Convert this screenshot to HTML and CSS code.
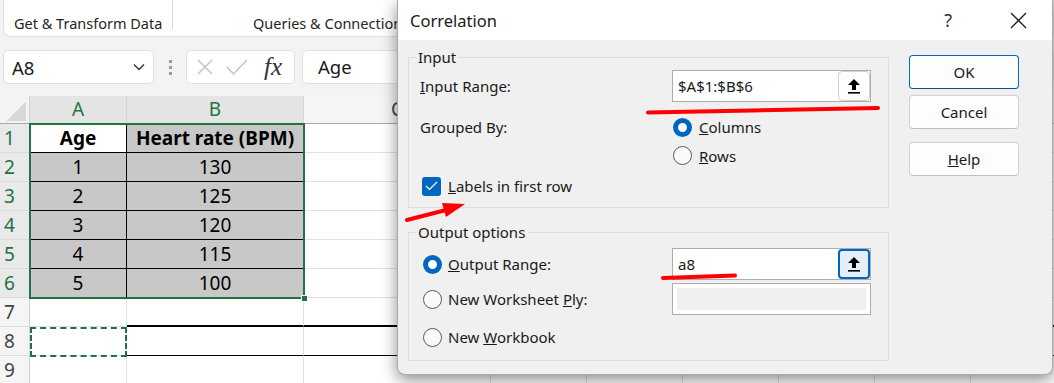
FILE: index.html
```html
<!DOCTYPE html>
<html lang="en">
<head>
  <meta charset="UTF-8" />
  <meta name="viewport" content="width=device-width, initial-scale=1.0" />
  <title>Correlation</title>
  <link rel="stylesheet" href="styles.css">
</head>
<body>
  <div class="excel">
    <div class="ribbon">
      <div class="ribbon-group group-get">Get &amp; Transform Data</div>
      <div class="ribbon-group group-queries">Queries &amp; Connections</div>
    </div>

    <div class="formula-bar">
      <div class="name-box">
        <span>A8</span>
        <svg width="12" height="8" viewBox="0 0 12 8"><path d="M1 1.5 L6 6.5 L11 1.5" fill="none" stroke="#333" stroke-width="1.4"/></svg>
      </div>
      <div class="grip"><i></i><i></i><i></i></div>
      <div class="fx-box">
        <svg width="18" height="18" viewBox="0 0 18 18"><path d="M2 2 L16 16 M16 2 L2 16" stroke="#c4c4c4" stroke-width="1.5"/></svg>
        <svg width="22" height="18" viewBox="0 0 22 18"><path d="M1 9 L7.5 16 L21 2" fill="none" stroke="#c4c4c4" stroke-width="1.5"/></svg>
        <span class="fx">fx</span>
      </div>
      <div class="formula-input">Age</div>
    </div>

    <div class="sheet" id="sheet">
      <div class="selection"><span class="fill-handle"></span></div>
      <div class="marquee"></div>
    </div>
  </div>

  <div class="dialog">
    <div class="dialog-title">
      <span class="title-text">Correlation</span>
      <span class="title-help">?</span>
      <svg class="title-close" width="17" height="17" viewBox="0 0 17 17"><path d="M1 1 L16 16 M16 1 L1 16" stroke="#1a1a1a" stroke-width="1.3"/></svg>
    </div>
    <div class="dialog-body">
      <div class="dialog-main">
        <fieldset class="group group-input">
          <legend>Input</legend>
          <div class="field-row range-row">
            <span class="field-label"><u>I</u>nput Range:</span>
            <div class="ref-box">
              <span class="ref-text">$A$1:$B$6</span>
              <span class="ref-btn">
                <svg width="12" height="15" viewBox="0 0 12 15"><path d="M6 0 L12 6 L8 6 L8 11 L4 11 L4 6 L0 6 Z" fill="#000"/><rect x="0" y="13" width="12" height="1.6" fill="#000"/></svg>
              </span>
            </div>
          </div>
          <div class="field-row radio-row first-radio">
            <span class="field-label">Grouped By:</span>
            <span class="radio on"></span>
            <span><u>C</u>olumns</span>
          </div>
          <div class="field-row radio-row">
            <span class="field-label"></span>
            <span class="radio"></span>
            <span><u>R</u>ows</span>
          </div>
          <div class="field-row check-row">
            <span class="check">
              <svg width="13" height="10" viewBox="0 0 13 10"><path d="M1 5 L4.5 8.5 L12 1" fill="none" stroke="#fff" stroke-width="1.2"/></svg>
            </span>
            <span><u>L</u>abels in first row</span>
          </div>
        </fieldset>

        <fieldset class="group group-output">
          <legend>Output options</legend>
          <div class="field-row range-row out-row">
            <span class="field-label option-label"><span class="radio on"></span><span><u>O</u>utput Range:</span></span>
            <div class="ref-box">
              <span class="ref-text">a8</span>
              <span class="ref-btn focused">
                <svg width="12" height="15" viewBox="0 0 12 15"><path d="M6 0 L12 6 L8 6 L8 11 L4 11 L4 6 L0 6 Z" fill="#000"/><rect x="0" y="13" width="12" height="1.6" fill="#000"/></svg>
              </span>
            </div>
          </div>
          <div class="field-row range-row ply-row">
            <span class="field-label option-label"><span class="radio"></span><span>New Worksheet <u>P</u>ly:</span></span>
            <div class="ref-box disabled"><span class="disabled-fill"></span></div>
          </div>
          <div class="field-row book-row">
            <span class="field-label option-label"><span class="radio"></span><span>New <u>W</u>orkbook</span></span>
          </div>
        </fieldset>
      </div>

      <div class="dialog-buttons">
        <button class="btn btn-default">OK</button>
        <button class="btn">Cancel</button>
        <button class="btn btn-help"><u>H</u>elp</button>
      </div>
    </div>
  </div>

  <svg class="marks" width="1054" height="383" viewBox="0 0 1054 383">
    <path d="M648 112.5 L878 108" stroke="#f00" stroke-width="4" stroke-linecap="round" fill="none"/>
    <path d="M663 278 L735 275.5" stroke="#f00" stroke-width="4" stroke-linecap="round" fill="none"/>
    <path d="M407 220 L446 210" stroke="#f00" stroke-width="4" stroke-linecap="round" fill="none"/>
    <path d="M465 204 L442 203 L446 217 Z" fill="#f00"/>
  </svg>

  <script>
    const cols = ['A', 'B', 'C', 'D', 'E', 'F', 'G', 'H', 'I'];
    const data = {
      1: ['Age', 'Heart rate (BPM)'],
      2: ['1', '130'],
      3: ['2', '125'],
      4: ['3', '120'],
      5: ['4', '115'],
      6: ['5', '100']
    };

    const sheet = document.getElementById('sheet');

    function addCell(cls, text) {
      const el = document.createElement('div');
      el.className = cls;
      el.textContent = text || '';
      sheet.appendChild(el);
    }

    addCell('corner');
    cols.forEach((c, i) => addCell('col-head' + (i < 2 ? ' sel' : ''), c));

    for (let r = 1; r <= 9; r++) {
      addCell('row-head' + (r <= 6 ? ' sel' : ''), r);
      cols.forEach((c, i) => {
        let cls = 'cell';
        if (data[r] && i < 2) {
          cls += ' data';
          if (r === 1) cls += ' bold';
          if (r === 1 && i === 0) cls += ' plain';
          if (i === 0) cls += ' rule-right';
          if (r < 6) cls += ' rule-bottom';
        }
        if (r === 7 && i > 0) cls += ' rule-thick';
        if (r === 8 && i > 0) cls += ' rule-bottom';
        addCell(cls, data[r] && i < 2 ? data[r][i] : '');
      });
    }
  </script>
</body>
</html>
```

FILE: styles.css
```css
* {
  margin: 0;
  padding: 0;
  box-sizing: border-box;
}

body {
  width: 1054px;
  height: 383px;
  overflow: hidden;
  position: relative;
  background: #f3f3f3;
  font-family: 'Noto Sans', 'Open Sans', sans-serif;
  color: #1a1a1a;
}

/* ---- excel behind the dialog ---- */

.ribbon {
  display: flex;
  height: 37px;
  margin-left: 3px;
  background: #fff;
  border: 1px solid #e2e2e2;
  border-top: none;
  border-bottom-left-radius: 8px;
}

.ribbon-group {
  font-size: 14.5px;
  color: #262626;
  padding-top: 13px;
  white-space: nowrap;
}

.group-get {
  width: 169px;
  padding-left: 10px;
  height: 29px;
  border-right: 1px solid #d6d6d6;
}

.group-queries {
  padding-left: 80px;
}

.formula-bar {
  display: flex;
  align-items: center;
  height: 34px;
  margin-top: 13px;
  padding-left: 3px;
}

.name-box {
  width: 151px;
  height: 34px;
  display: flex;
  align-items: center;
  justify-content: space-between;
  padding: 0 8px 0 8px;
  background: #fff;
  border: 1px solid #e0e0e0;
  border-radius: 5px;
  font-size: 18.5px;
}

.grip {
  width: 32px;
  display: flex;
  flex-direction: column;
  align-items: center;
  gap: 3px;
}

.grip i {
  width: 3px;
  height: 3px;
  background: #9a9a9a;
}

.fx-box {
  width: 109px;
  height: 34px;
  display: flex;
  align-items: center;
  gap: 12px;
  padding-left: 9px;
  background: #fff;
  border: 1px solid #e0e0e0;
  border-radius: 5px;
}

.fx {
  font-family: 'Liberation Serif', serif;
  font-style: italic;
  font-size: 25px;
  color: #333;
  margin-left: 4px;
}

.formula-input {
  flex: 1;
  height: 34px;
  margin-left: 7px;
  padding-left: 15px;
  background: #fff;
  border: 1px solid #e0e0e0;
  border-radius: 5px;
  font-size: 18.5px;
  line-height: 32px;
}

.sheet {
  position: relative;
  margin-top: 12px;
  display: grid;
  grid-template-columns: 30px 97px 177px 187px 96px 96px 96px 96px 96px 96px;
  grid-template-rows: 28px repeat(9, 29px);
  background: #fff;
  font-size: 19px;
}

.corner {
  background: #f3f3f3 linear-gradient(135deg, transparent 55%, #d7d7d7 55%) no-repeat;
  background-size: 22px 22px;
  background-position: 4px 3px;
  border-right: 1px solid #d0d0d0;
  border-bottom: 1px solid #a8a8a8;
}

.col-head {
  background: #f5f5f5;
  color: #444;
  text-align: center;
  line-height: 27px;
  border-right: 1px solid #d6d6d6;
  border-bottom: 1px solid #a8a8a8;
}

.col-head.sel {
  background: #e4e4e4;
  color: #217346;
}

.row-head {
  background: #f5f5f5;
  color: #444;
  padding-left: 4px;
  line-height: 28px;
  border-right: 1px solid #d0d0d0;
  border-bottom: 1px solid #dcdcdc;
}

.row-head.sel {
  background: #e9e9e9;
  color: #217346;
}

.cell {
  border-right: 1px solid #e1e1e1;
  border-bottom: 1px solid #e1e1e1;
  text-align: center;
  line-height: 28px;
  color: #000;
}

.cell.data {
  background: #c8c8c8;
}

.cell.plain {
  background: #fff;
}

.cell.bold {
  font-weight: bold;
}

.cell.rule-right {
  border-right-color: #000;
}

.cell.rule-bottom {
  border-bottom-color: #000;
}

.cell.rule-thick {
  border-bottom: 2px solid #000;
}

.selection {
  position: absolute;
  left: 29px;
  top: 27px;
  width: 276px;
  height: 176px;
  border: 2px solid #217346;
}

.fill-handle {
  position: absolute;
  right: -5px;
  bottom: -5px;
  width: 7px;
  height: 7px;
  background: #217346;
  border: 1px solid #fff;
}

.marquee {
  position: absolute;
  left: 30px;
  top: 231px;
  width: 97px;
  height: 30px;
  border: 2px dashed #217346;
}

/* ---- correlation dialog ---- */

.dialog {
  position: absolute;
  left: 397px;
  top: 0;
  width: 656px;
  height: 375px;
  background: #f0f0f0;
  border: 1px solid #a9a9a9;
  border-top: none;
  border-radius: 0 0 8px 8px;
  box-shadow: 0 5px 16px rgba(0, 0, 0, 0.45);
  font-size: 15px;
  overflow: hidden;
}

.dialog-title {
  height: 40px;
  background: #fff;
  display: flex;
  align-items: center;
  padding-left: 12px;
}

.title-text {
  font-size: 16.5px;
  flex: 1;
}

.title-help {
  font-size: 18px;
  color: #333;
  margin-right: 58px;
}

.title-close {
  margin-right: 25px;
}

.dialog-body {
  display: flex;
  gap: 20px;
  padding-left: 10px;
}

.dialog-main {
  width: 481px;
  padding-top: 7px;
}

.group {
  border: 1px solid #dcdcdc;
  padding: 0 16px 7px 7px;
}

.group legend {
  padding: 0 3px 0 2px;
  line-height: 20px;
}

.group-output {
  margin-top: 14px;
  padding-bottom: 8px;
}

.field-row {
  display: flex;
  align-items: center;
  padding-left: 4px;
  white-space: nowrap;
}

.field-label {
  width: 252px;
  flex-shrink: 0;
}

.range-row {
  height: 32px;
  margin-top: 3px;
}

.radio-row {
  height: 29px;
}

.first-radio {
  margin-top: 11px;
  height: 28px;
}

.radio-row .radio {
  margin-left: 1px;
  margin-right: 7px;
}

.check-row {
  height: 28px;
  margin-top: 2px;
  padding-left: 6px;
  gap: 7px;
}

.check {
  width: 19px;
  height: 19px;
  border-radius: 3px;
  background: #0067c0;
  display: flex;
  align-items: center;
  justify-content: center;
}

.radio {
  display: inline-block;
  width: 19px;
  height: 19px;
  border-radius: 50%;
  border: 1px solid #5a5a5a;
  background: #fafafa;
  flex-shrink: 0;
}

.radio.on {
  border: 5px solid #0067c0;
  background: #fff;
}

.option-label {
  display: flex;
  align-items: center;
  gap: 6px;
  padding-left: 3px;
}

.out-row {
  margin-top: 6px;
}

.book-row {
  height: 30px;
  margin-top: 7px;
}

.ref-box {
  width: 199px;
  height: 32px;
  background: #fff;
  border: 1px solid #adadad;
  display: flex;
  align-items: center;
  justify-content: space-between;
  padding-left: 5px;
}

.ref-text {
  font-size: 15px;
}

.ref-btn {
  width: 32px;
  height: 30px;
  border: 1px solid #cfcfcf;
  border-radius: 4px;
  background: #fdfdfd;
  display: flex;
  align-items: center;
  justify-content: center;
}

.ref-btn.focused {
  border: 2px solid #0067c0;
  background: #e6eff9;
}

.ref-box.disabled {
  padding: 4px;
}

.disabled-fill {
  flex: 1;
  height: 100%;
  background: #efefef;
}

.dialog-buttons {
  width: 110px;
  display: flex;
  flex-direction: column;
  padding-top: 15px;
}

.btn {
  height: 34px;
  font-family: inherit;
  font-size: 15px;
  color: #1a1a1a;
  background: #fdfdfd;
  border: 1px solid #d0d0d0;
  border-bottom-color: #c0c0c0;
  border-radius: 4px;
  margin-bottom: 6px;
}

.btn-default {
  border-color: #0067c0;
  border-bottom-color: #00519a;
}

.btn-help {
  margin-top: 7px;
}

.marks {
  position: absolute;
  left: 0;
  top: 0;
  pointer-events: none;
}
```
